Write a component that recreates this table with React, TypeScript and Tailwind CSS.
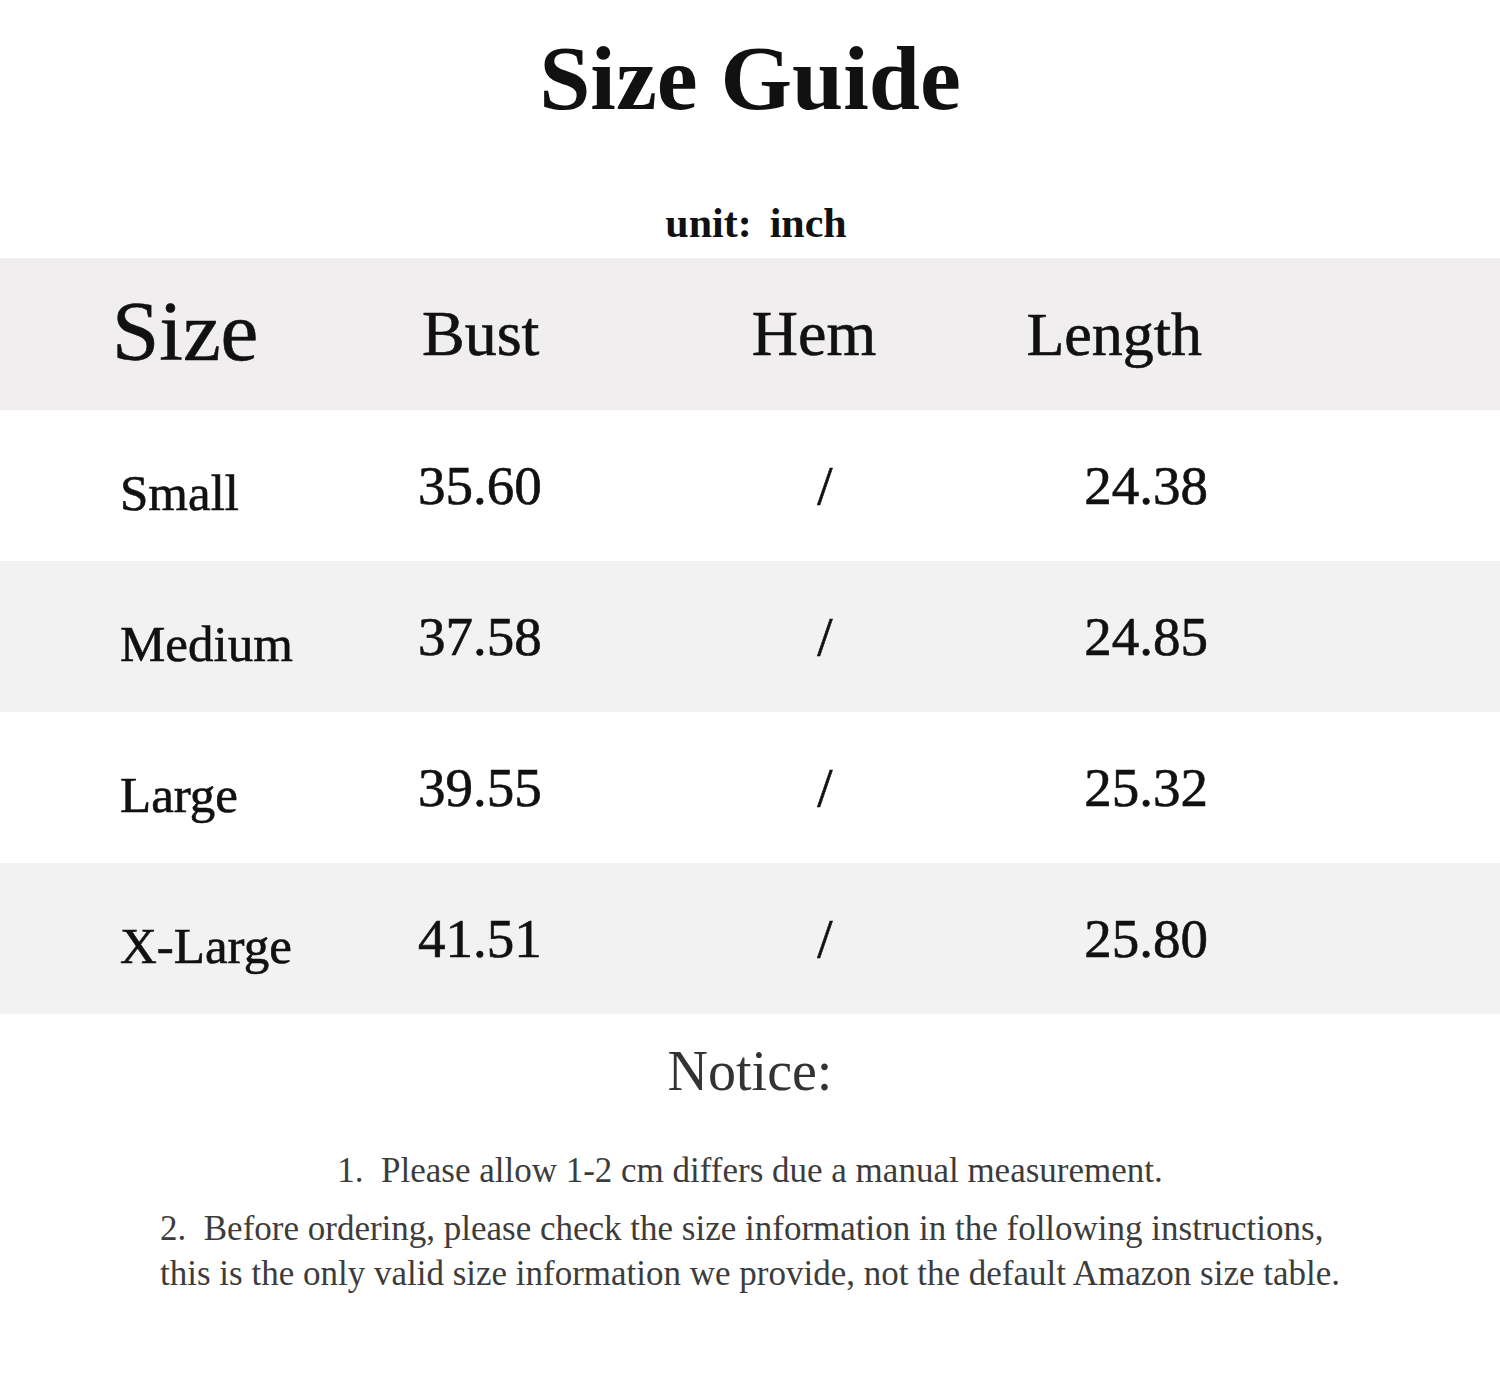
import React from 'react';

const rows = [
  { size: 'Small', bust: '35.60', hem: '/', length: '24.38' },
  { size: 'Medium', bust: '37.58', hem: '/', length: '24.85' },
  { size: 'Large', bust: '39.55', hem: '/', length: '25.32' },
  { size: 'X-Large', bust: '41.51', hem: '/', length: '25.80' },
];

const serif = "font-['Liberation_Serif',serif]";

export default function App() {
  return (
    <div className={`w-[1500px] h-[1386px] bg-white text-[#111] ${serif}`}>
      {/* title */}
      <h1 className="pt-[32px] text-center text-[92px] font-bold leading-none">Size Guide</h1>
      <p className="mt-[78px] text-center text-[42px] font-bold leading-none pl-[12px]">
        unit:<span className="ml-[18px]">inch</span>
      </p>

      {/* table */}
      <div className="mt-[14px] [-webkit-text-stroke:0.6px_#111]">
        <div className="grid h-[152px] grid-cols-[418px_322px_170px_300px] items-center bg-[#f0eeee]">
          <div className="pl-[112px] pb-[6px] text-[85px] leading-none">Size</div>
          <div className="pl-[4px] text-[64px] leading-none">Bust</div>
          <div className="text-center text-[64px] leading-none -ml-[22px]">Hem</div>
          <div className="text-right pr-[8px] text-[62px] leading-none">Length</div>
        </div>
        {rows.map((r, i) => (
          <div
            key={r.size}
            className={`grid h-[151px] grid-cols-[418px_322px_170px_300px] items-center ${
              i % 2 === 1 ? 'bg-[#f2f2f2]' : 'bg-white'
            }`}
          >
            <div className="pl-[120px] pt-[16px] text-[51px] leading-none">{r.size}</div>
            <div className="text-[55px] leading-none">{r.bust}</div>
            <div className="text-center text-[55px] leading-none">{r.hem}</div>
            <div className="text-right pr-[2px] text-[55px] leading-none">{r.length}</div>
          </div>
        ))}
      </div>

      {/* notes */}
      <h2 className="mt-[29px] text-center text-[56px] leading-none text-[#333]">Notice:</h2>
      <p className="mt-[54px] text-center text-[35px] leading-none text-[#3c3c3c]">
        1.&nbsp;&nbsp;Please allow 1-2 cm differs due a manual measurement.
      </p>
      <p className="mx-auto mt-[18px] w-fit text-left text-[35px] leading-[45px] text-[#3c3c3c]">
        2.&nbsp;&nbsp;Before ordering, please check the size information in the following instructions,
        <br />
        this is the only valid size information we provide, not the default Amazon size table.
      </p>
    </div>
  );
}
